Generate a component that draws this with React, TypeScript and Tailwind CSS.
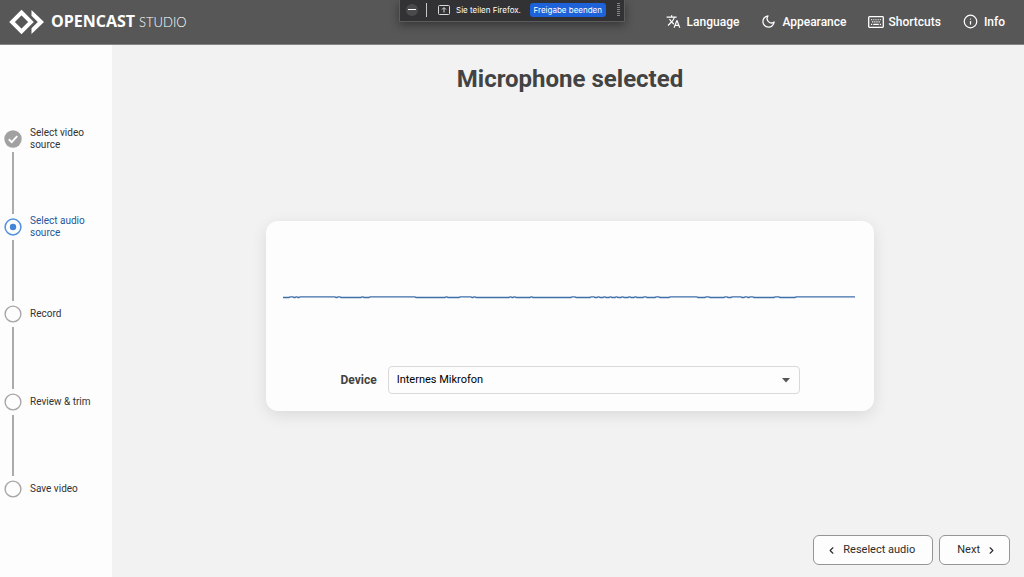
import { FiInfo, FiMoon } from "react-icons/fi";
import { MdTranslate } from "react-icons/md";
import { ChevronLeft, ChevronRight } from "lucide-react";

type StepState = "done" | "active" | "todo";

const steps: Array<{ label: string; state: StepState }> = [
  { label: "Select video source", state: "done" },
  { label: "Select audio source", state: "active" },
  { label: "Record", state: "todo" },
  { label: "Review & trim", state: "todo" },
  { label: "Save video", state: "todo" },
];

// x positions where the input level flips between its two values
const levelChanges = [
  6, 10, 12, 14, 16, 52, 54, 57, 78, 80, 86, 132, 162, 164, 176, 188, 190, 192, 226, 228, 230, 232, 247,
  249, 288, 292, 307, 311, 314, 316, 320, 322, 326, 328, 332, 334, 338, 340, 345, 347, 351, 353, 360, 363,
  372, 376, 386, 414, 422, 426, 441, 444, 448, 458, 461, 464, 466, 470, 491, 496, 512,
];

function wavePath() {
  let path = "M0 2.5";
  levelChanges.forEach((x, i) => {
    const before = i % 2 === 0 ? 2.5 : 1.9;
    const after = i % 2 === 0 ? 1.9 : 2.5;
    path += ` L${x} ${before} L${x + 1} ${after}`;
  });
  return `${path} L572 1.9`;
}

function Logo() {
  return (
    <a href="#" aria-label="Opencast Studio" className="flex items-center text-white">
      <svg width="36" height="26" viewBox="0 0 36 26" className="shrink-0">
        <path d="M12.5 3.5 L22 13 L12.5 22.5 L3 13 Z" fill="none" stroke="currentColor" strokeWidth="3.9" />
        <path d="M22.5 1 L35 13 L22.5 25 V19.2 L28.8 13 L22.5 6.8 Z" fill="currentColor" />
      </svg>
      <span className="ml-1.5 flex items-baseline">
        <span className="font-['Open_Sans',sans-serif] text-[16px] leading-6 font-bold">OPENCAST</span>
        <span className="ml-1 font-[Lato,sans-serif] text-[13px] leading-6 font-light">STUDIO</span>
      </span>
    </a>
  );
}

function KeyboardIcon() {
  return (
    <svg width="16" height="12" viewBox="0 0 16 12" fill="none" stroke="currentColor">
      <rect x="0.7" y="0.7" width="14.6" height="10.6" rx="0.8" strokeWidth="1.3" />
      <path d="M3 3.8 H13" strokeDasharray="1.2 1" strokeWidth="1.1" />
      <path d="M4 5.9 H12.4" strokeDasharray="1.2 1" strokeWidth="1.1" />
      <path d="M3 8.4 H4.2 M5.2 8.4 H10.8 M11.8 8.4 H13" strokeWidth="1.1" />
    </svg>
  );
}

function Header() {
  return (
    <header className="flex h-[45px] shrink-0 items-center justify-between border-b border-[#858585] bg-[#575757] pr-[19px] pb-px pl-[9px]">
      <Logo />
      <nav className="flex items-center gap-[22px] text-[12px] font-medium text-white">
        <button className="flex items-center gap-1.5">
          <MdTranslate size={15} />
          Language
        </button>
        <button className="flex items-center gap-1.5">
          <FiMoon size={15} />
          Appearance
        </button>
        <button className="flex items-center gap-1">
          <KeyboardIcon />
          Shortcuts
        </button>
        <button className="flex items-center gap-1.5">
          <FiInfo size={15} />
          Info
        </button>
      </nav>
    </header>
  );
}

function SharingBar() {
  return (
    <div className="absolute top-0 left-1/2 flex h-[22px] w-[226px] -translate-x-1/2 items-center border border-t-0 border-[#5c5c5d] bg-[#323234] pr-1 pb-0.5 pl-1.5 font-[Inter,sans-serif] text-[8px] text-white shadow-[0_3px_10px_rgba(0,0,0,0.4)]">
      <button aria-label="Minimize" className="flex size-3 items-center justify-center rounded-full bg-[#4a4a4c]">
        <span className="h-px w-2 bg-white" />
      </button>
      <span className="ml-2 h-3.5 w-px bg-[#c8c8c8]" />
      <svg width="12" height="10" viewBox="0 0 12 10" fill="none" stroke="#d8d8d8" className="ml-[11px]">
        <rect x="0.5" y="0.5" width="11" height="9" rx="1" />
        <path d="M6 7.5 V3 M4 4.5 L6 2.5 L8 4.5" />
      </svg>
      <span className="ml-1.5 whitespace-nowrap">Sie teilen Firefox.</span>
      <button className="ml-auto h-3.5 rounded-[3px] bg-[#1d62d8] px-1 whitespace-nowrap">Freigabe beenden</button>
      <svg width="3" height="13" viewBox="0 0 3 13" stroke="#858585" strokeWidth="3" strokeDasharray="1 1" className="ml-[11px]">
        <path d="M1.5 0 V13" />
      </svg>
    </div>
  );
}

function StepMarker({ state }: { state: StepState }) {
  return (
    <svg width="18" height="18" viewBox="0 0 18 18" fill="none" className="shrink-0">
      {state === "done" && (
        <>
          <circle cx="9" cy="9" r="8.7" fill="#a1a1a1" />
          <path d="M4.8 9.3 L7.7 12.1 L13.2 6.2" stroke="white" strokeWidth="1.9" />
        </>
      )}
      {state === "active" && (
        <>
          <circle cx="9" cy="9" r="7.9" stroke="#5290dc" strokeWidth="1.5" />
          <circle cx="9" cy="9" r="3.2" fill="#4385d6" />
        </>
      )}
      {state === "todo" && <circle cx="9" cy="9" r="7.9" stroke="#a6a6a6" strokeWidth="1.4" />}
    </svg>
  );
}

function Sidebar() {
  return (
    <aside className="flex w-28 shrink-0 flex-col justify-center bg-[#fdfdfd] pt-1.5 pl-1">
      <ol className="flex h-[368px] flex-col">
        {steps.map((step) => (
          <li key={step.label} className="group flex flex-1 flex-col last:flex-none">
            <div className="flex h-[18px] items-center gap-2">
              <StepMarker state={step.state} />
              <span
                className={`w-[72px] text-[10px] leading-3 ${
                  step.state === "active" ? "text-[#235799]" : "text-[#333333]"
                }`}
              >
                {step.label}
              </span>
            </div>
            <div className="my-1 ml-2 w-0.5 flex-1 bg-[#ababab] group-last:hidden" />
          </li>
        ))}
      </ol>
    </aside>
  );
}

function MicrophoneCard() {
  return (
    <section className="w-full max-w-[608px] rounded-xl bg-[#fdfdfd] px-[17px] pt-[74px] pb-[17px] shadow-[0_4px_16px_rgba(0,0,0,0.1)]">
      <svg viewBox="0 0 574 4" preserveAspectRatio="none" className="h-1 w-full">
        <path d={wavePath()} fill="none" stroke="#3f6fa8" strokeWidth="1.4" />
      </svg>
      <div className="mx-auto mt-[67px] flex max-w-[459px] items-center gap-[11px]">
        <label htmlFor="device" className="text-[12px] font-bold text-[#434343]">
          Device
        </label>
        <div className="relative flex-1">
          <select
            id="device"
            className="h-7 w-full appearance-none rounded border border-[#d9d9d9] bg-[#fdfdfd] px-2 pt-0.5 text-[11px] text-black"
          >
            <option>Internes Mikrofon</option>
          </select>
          <svg width="8" height="5" viewBox="0 0 8 5" className="pointer-events-none absolute top-3 right-2.5">
            <path d="M0 0 H8 L4 4.5 Z" fill="#555555" />
          </svg>
        </div>
      </div>
    </section>
  );
}

export default function App() {
  return (
    <div className="relative flex min-h-screen flex-col bg-[#f2f2f2] font-[Roboto,sans-serif]">
      <Header />
      <SharingBar />
      <div className="flex flex-1">
        <Sidebar />
        <main className="flex flex-1 flex-col pt-[18px] pr-3.5 pb-3 pl-[18px]">
          <h1 className="text-center text-2xl font-bold text-[#434343]">Microphone selected</h1>
          <div className="flex flex-1 items-center justify-center pt-px">
            <MicrophoneCard />
          </div>
          <footer className="flex justify-end gap-1.5 text-[11px] text-[#2b2b2b]">
            <button className="flex h-[30px] items-center gap-1.5 rounded-md border border-[#959595] bg-[#fdfdfd] pr-[17px] pl-3">
              <ChevronLeft size={11} strokeWidth={2.5} />
              Reselect audio
            </button>
            <button className="flex h-[30px] items-center gap-1.5 rounded-md border border-[#959595] bg-[#fdfdfd] pr-3 pl-[17px]">
              Next
              <ChevronRight size={11} strokeWidth={2.5} />
            </button>
          </footer>
        </main>
      </div>
    </div>
  );
}
